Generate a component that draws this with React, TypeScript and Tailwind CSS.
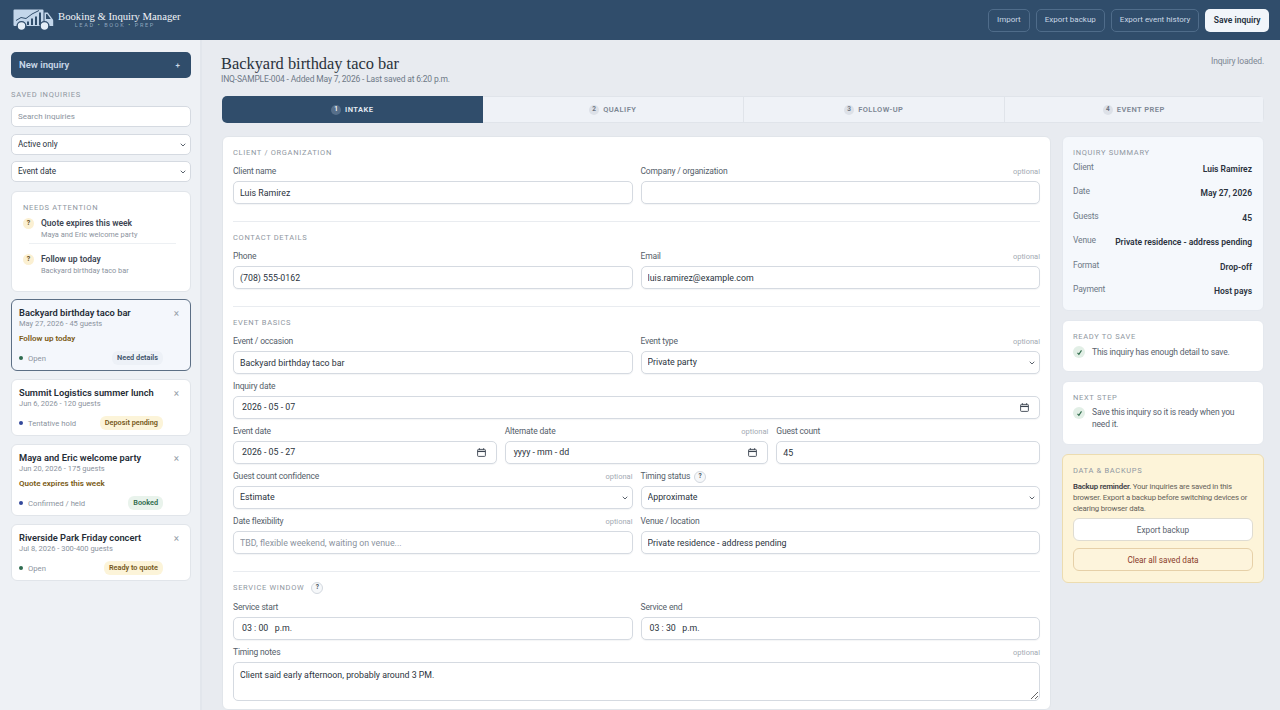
import { ReactNode } from "react";
import { ChevronDown } from "lucide-react";

const inputBox =
  "block h-[23px] w-full rounded-[5px] border border-[#d5dae1] bg-white px-[6px] text-[8.8px] text-[#2b3440] outline-none shadow-[0_1px_1px_rgba(30,50,80,0.05)]";
const sectionLabel = "text-[7.5px] uppercase tracking-[0.09em] text-[#8f97a1]";

function Truck() {
  return (
    <svg width="41" height="22" viewBox="0 0 41 22" fill="none" className="shrink-0">
      <path d="M1.5 0.5h28a1 1 0 0 1 1 1V17H1.5a1 1 0 0 1-1-1V1.5a1 1 0 0 1 1-1z" fill="#c3d6ea" />
      <path d="M31.5 3.5h3.2l5 6.8a2 2 0 0 1 .5 1.2V17h-8.7z" fill="#c3d6ea" />
      <path d="M33 5h1.2l3.6 5H33z" fill="#304d6b" />
      <path d="M3 11.5l5-3 5 1 6-4.500 7-3.500" stroke="#304d6b" strokeWidth="1" />
      <path d="M15 16v-3.500M19 16V9.500M23 16V7.500M27 16V3.500" stroke="#304d6b" strokeWidth="2" />
      <circle cx="8.500" cy="17" r="4.400" fill="#e4edf6" stroke="#304d6b" strokeWidth="1.400" />
      <circle cx="31.500" cy="17" r="4.400" fill="#e4edf6" stroke="#304d6b" strokeWidth="1.400" />
    </svg>
  );
}

function Header() {
  return (
    <header className="flex h-10 shrink-0 items-center justify-between bg-[#304d6b] pl-[13px] pr-[11px]">
      <div className="flex items-center gap-[4px]">
        <Truck />
        <div className="flex flex-col items-center pb-[1px]">
          <span className="text-[10.7px] leading-[12px] text-[#f2f5f9] font-['Liberation_Serif',serif]">
            Booking &amp; Inquiry Manager
          </span>
          <span className="mr-[9px] text-[5.5px] leading-[7px] tracking-[0.3em] text-[#8ea6be]">
            LEAD <span className="text-[#9fc48f]">•</span> BOOK <span className="text-[#9fc48f]">•</span> PREP
          </span>
        </div>
      </div>
      <div className="flex items-center gap-[6px]">
        {["Import", "Export backup", "Export event history"].map((t) => (
          <button key={t} className="h-[23px] rounded-[5px] border border-[#4f6c8a] px-[8px] text-[8px] text-[#c9d7e5]">
            {t}
          </button>
        ))}
        <button className="h-[23px] rounded-[5px] bg-[#f1f5fa] px-[8.5px] text-[8.5px] font-semibold text-[#24303d]">
          Save inquiry
        </button>
      </div>
    </header>
  );
}

function SelectControl({ value, className }: { value: string; className: string }) {
  return (
    <div className="relative">
      <select defaultValue={value} className={`${className} appearance-none`}>
        <option>{value}</option>
      </select>
      <ChevronDown size={8} strokeWidth={2.5} className="pointer-events-none absolute right-[4px] top-1/2 -translate-y-1/2 text-[#3b4450]" />
    </div>
  );
}

function Alert({ title, sub }: { title: string; sub: string }) {
  return (
    <div className="flex gap-[7px]">
      <span className="mt-[1px] flex h-[11px] w-[11px] shrink-0 items-center justify-center rounded-full bg-[#fbf0d2] text-[7px] font-bold text-[#5f4a17]">
        ?
      </span>
      <div>
        <div className="text-[8.5px] font-semibold leading-[12px] text-[#3d4653]">{title}</div>
        <div className="text-[7.4px] leading-[11px] text-[#8b939e]">{sub}</div>
      </div>
    </div>
  );
}

interface InquiryCardProps {
  title: string;
  meta: string;
  warn?: string;
  status: string;
  dot: string;
  badge: string;
  badgeClass: string;
  selected?: boolean;
}

function InquiryCard({ title, meta, warn, status, dot, badge, badgeClass, selected }: InquiryCardProps) {
  return (
    <div
      className={`relative rounded-[6px] border pb-[5px] pl-[7px] pr-2 pt-[6px] ${
        selected ? "border-[#5c6f85] bg-[#f4f7fc]" : "border-[#e1e5ea] bg-white"
      }`}
    >
      <span className="absolute right-[11px] top-[8px] text-[10px] leading-[12px] text-[#98a0aa]">×</span>
      <div className="text-[9.3px] font-semibold leading-[13px] text-[#252c36]">{title}</div>
      <div className="text-[7.5px] leading-[9px] text-[#8b939e]">{meta}</div>
      {warn && <div className="mt-[5px] text-[8px] font-semibold leading-[11px] text-[#7a5a14]">{warn}</div>}
      <div className={`flex items-center justify-between pr-[19px] ${warn ? "mt-[7px]" : "mt-[8px]"}`}>
        <div className="flex items-center gap-[4px] pt-[1px]">
          <span className={`h-[4px] w-[4px] rounded-full ${dot}`} />
          <span className="pl-[1px] text-[7.7px] text-[#8b939e]">{status}</span>
        </div>
        <span className={`rounded-[6px] px-[5px] py-[2px] text-[7.3px] font-semibold leading-[10px] ${badgeClass}`}>{badge}</span>
      </div>
    </div>
  );
}

function Sidebar() {
  const sideInput = "block h-[21px] w-full rounded-[5px] border border-[#d5dae1] bg-white px-[6px] text-[#2b3440]";
  return (
    <aside className="flex w-[202px] shrink-0 flex-col border-r-[2px] border-[#e2e6ec] bg-[#eef1f5] pl-[11px] pr-[9px] pt-3">
      <button className="flex h-[26px] items-center justify-between rounded-[5px] bg-[#304d6b] px-[8px] pt-[1px] text-[9.5px] font-semibold text-[#c8d8e8]">
        <span>New inquiry</span>
        <span className="pr-[3px] text-[8px]">+</span>
      </button>
      <div className={`${sectionLabel} mt-[12px] leading-[9px]`}>Saved inquiries</div>
      <input placeholder="Search inquiries" className={`${sideInput} mt-[7px] text-[8px] placeholder:text-[#8b939e]`} />
      <div className="mt-[7px] flex flex-col gap-[6px]">
        <SelectControl value="Active only" className={`${sideInput} text-[8.2px]`} />
        <SelectControl value="Event date" className={`${sideInput} text-[8.2px]`} />
      </div>
      <div className="mt-[9px] rounded-[6px] border border-[#e1e5ea] bg-white px-[11px] pb-[15px] pt-[11px]">
        <div className={`${sectionLabel} leading-[9px]`}>Needs attention</div>
        <div className="mt-[5px]">
          <Alert title="Quote expires this week" sub="Maya and Eric welcome party" />
        </div>
        <div className="mb-[9px] ml-[6px] mr-[3px] mt-[3px] border-t border-[#edf0f3]" />
        <Alert title="Follow up today" sub="Backyard birthday taco bar" />
      </div>
      <div className="mt-[7px] flex flex-col gap-[8px]">
        <InquiryCard
          selected
          title="Backyard birthday taco bar"
          meta="May 27, 2026 - 45 guests"
          warn="Follow up today"
          status="Open"
          dot="bg-[#2e6b4f]"
          badge="Need details"
          badgeClass="bg-[#edf1f7] text-[#3a4f68]"
        />
        <InquiryCard
          title="Summit Logistics summer lunch"
          meta="Jun 6, 2026 - 120 guests"
          status="Tentative hold"
          dot="bg-[#33489b]"
          badge="Deposit pending"
          badgeClass="bg-[#fcf4d9] text-[#75581a]"
        />
        <InquiryCard
          title="Maya and Eric welcome party"
          meta="Jun 20, 2026 - 175 guests"
          warn="Quote expires this week"
          status="Confirmed / held"
          dot="bg-[#33489b]"
          badge="Booked"
          badgeClass="bg-[#e9f3ec] text-[#2f6a4b]"
        />
        <InquiryCard
          title="Riverside Park Friday concert"
          meta="Jul 8, 2026 - 300-400 guests"
          status="Open"
          dot="bg-[#2e6b4f]"
          badge="Ready to quote"
          badgeClass="bg-[#fcf4d9] text-[#75581a]"
        />
      </div>
    </aside>
  );
}

function Tabs() {
  const tabs = ["Intake", "Qualify", "Follow-up", "Event prep"];
  return (
    <div className="grid grid-cols-4 overflow-hidden rounded-[5px] bg-[#eff2f7]">
      {tabs.map((t, i) => (
        <div
          key={t}
          className={`flex h-[27px] items-center justify-center gap-[4px] text-[7.5px] font-semibold uppercase tracking-[0.06em] ${
            i === 0
              ? "bg-[#304d6b] text-[#e6edf4]"
              : `border-y border-[#e0e4ea] text-[#7d8794] ${i === 3 ? "border-r" : ""} ${i > 1 ? "border-l" : ""}`
          }`}
        >
          <span
            className={`flex h-[10px] w-[10px] items-center justify-center rounded-full text-[6.5px] tracking-normal ${
              i === 0 ? "bg-[#566f8a] text-white" : "bg-[#dde1e8] text-[#69727e]"
            }`}
          >
            {i + 1}
          </span>
          {t}
        </div>
      ))}
    </div>
  );
}

function Hint() {
  return (
    <span className="flex h-[12px] w-[12px] items-center justify-center rounded-full border border-[#d3d8df] bg-[#f6f8fa] text-[6.5px] font-bold tracking-normal text-[#46505c]">
      ?
    </span>
  );
}

function Field({
  label,
  optional,
  hint,
  children,
}: {
  label: string;
  optional?: boolean;
  hint?: boolean;
  children: ReactNode;
}) {
  return (
    <div className="min-w-0">
      <div className="flex h-[17px] items-center justify-between pb-[2px] text-[8.5px] leading-[9px] tracking-[-0.02em] text-[#555e6a]">
        <span className="flex items-center gap-[4px]">
          {label}
          {hint && <Hint />}
        </span>
        {optional && <span className="text-[7.5px] tracking-normal text-[#a3aab3]">optional</span>}
      </div>
      {children}
    </div>
  );
}

function TextBox({ value, placeholder }: { value?: string; placeholder?: string }) {
  return <input readOnly value={value ?? ""} placeholder={placeholder} className={`${inputBox} placeholder:text-[#8b939e]`} />;
}

function SelectBox({ value }: { value: string }) {
  return <SelectControl value={value} className={inputBox} />;
}

function DateBox({ value }: { value: string }) {
  return (
    <div className={`${inputBox} flex items-center justify-between pl-[8px] pr-[10px]`}>
      <span>{value}</span>
      <svg width="9" height="9" viewBox="0 0 9 9" fill="none" stroke="#3b4450" strokeWidth="0.9">
        <rect x="0.6" y="1.4" width="7.8" height="7" rx="0.8" />
        <path d="M0.6 3.4h7.8" strokeWidth="1.3" />
        <path d="M2.4 0.2v1.6M6.6 0.2v1.6" />
      </svg>
    </div>
  );
}

function TimeBox({ value }: { value: string }) {
  return (
    <div className={`${inputBox} flex items-center whitespace-pre pl-[8px]`}>
      <span>{value}</span>
    </div>
  );
}

function Section({ title, hint, children, last }: { title: string; hint?: boolean; children: ReactNode; last?: boolean }) {
  return (
    <section className={last ? "" : "mb-[10px] border-b border-[#e9ecf0] pb-[17px]"}>
      <div className={`${sectionLabel} flex h-[12px] items-center gap-[7px]`}>
        {title}
        {hint && <Hint />}
      </div>
      {children}
    </section>
  );
}

function FormCard() {
  return (
    <div className="rounded-[6px] border border-[#e1e5ea] bg-white px-[10px] pb-[8px] pt-[10px]">
      <Section title="Client / organization">
        <div className="mt-[5px] grid grid-cols-2 gap-x-2">
          <Field label="Client name">
            <TextBox value="Luis Ramirez" />
          </Field>
          <Field label="Company / organization" optional>
            <TextBox />
          </Field>
        </div>
      </Section>
      <Section title="Contact details">
        <div className="mt-[5px] grid grid-cols-2 gap-x-2">
          <Field label="Phone">
            <TextBox value="(708) 555-0162" />
          </Field>
          <Field label="Email" optional>
            <TextBox value="luis.ramirez@example.com" />
          </Field>
        </div>
      </Section>
      <Section title="Event basics">
        <div className="mt-[5px] flex flex-col gap-y-[5px]">
          <div className="grid grid-cols-2 gap-x-2">
            <Field label="Event / occasion">
              <TextBox value="Backyard birthday taco bar" />
            </Field>
            <Field label="Event type" optional>
              <SelectBox value="Private party" />
            </Field>
          </div>
          <Field label="Inquiry date">
            <DateBox value="2026 - 05 - 07" />
          </Field>
          <div className="grid grid-cols-3 gap-x-2">
            <Field label="Event date">
              <DateBox value="2026 - 05 - 27" />
            </Field>
            <Field label="Alternate date" optional>
              <DateBox value="yyyy - mm - dd" />
            </Field>
            <Field label="Guest count">
              <TextBox value="45" />
            </Field>
          </div>
          <div className="grid grid-cols-2 gap-x-2">
            <Field label="Guest count confidence" optional>
              <SelectBox value="Estimate" />
            </Field>
            <Field label="Timing status" hint>
              <SelectBox value="Approximate" />
            </Field>
          </div>
          <div className="grid grid-cols-2 gap-x-2">
            <Field label="Date flexibility" optional>
              <TextBox placeholder="TBD, flexible weekend, waiting on venue..." />
            </Field>
            <Field label="Venue / location">
              <TextBox value="Private residence - address pending" />
            </Field>
          </div>
        </div>
      </Section>
      <Section title="Service window" hint last>
        <div className="mt-[6px] flex flex-col gap-y-[5px]">
          <div className="grid grid-cols-2 gap-x-2">
            <Field label="Service start">
              <TimeBox value="03 : 00   p.m." />
            </Field>
            <Field label="Service end">
              <TimeBox value="03 : 30   p.m." />
            </Field>
          </div>
          <Field label="Timing notes" optional>
            <textarea
              readOnly
              value="Client said early afternoon, probably around 3 PM."
              className="block h-[39px] w-full rounded-[5px] border border-[#d5dae1] bg-white px-[6px] py-[6px] text-[8.8px] leading-[12px] text-[#2b3440] outline-none"
            />
          </Field>
        </div>
      </Section>
    </div>
  );
}

function SummaryRow({ label, value }: { label: string; value: string }) {
  return (
    <div className="flex h-[24.4px] items-start justify-between pr-[1px]">
      <span className="text-[8.5px] leading-[10px] tracking-[-0.02em] text-[#6e7987]">{label}</span>
      <span className="pt-[2px] text-[8.5px] font-semibold leading-[10px] text-[#2a323c]">{value}</span>
    </div>
  );
}

function Check() {
  return (
    <span className="flex h-[12px] w-[12px] shrink-0 items-center justify-center rounded-full bg-[#e2efe6]">
      <svg width="7" height="7" viewBox="0 0 7 7" fill="none" stroke="#2f6a4b" strokeWidth="1.1">
        <path d="M1.5 3.8l1.4 1.6L5.5 1.4" />
      </svg>
    </span>
  );
}

function RightColumn() {
  return (
    <div className="flex w-[202px] shrink-0 flex-col gap-[9px]">
      <div className="h-[175px] rounded-[6px] border border-[#e4e8ee] bg-[#f5f8fc] px-[10px] pt-[11px]">
        <div className={`${sectionLabel} leading-[9px]`}>Inquiry summary</div>
        <div className="mt-[5px]">
          <SummaryRow label="Client" value="Luis Ramirez" />
          <SummaryRow label="Date" value="May 27, 2026" />
          <SummaryRow label="Guests" value="45" />
          <SummaryRow label="Venue" value="Private residence - address pending" />
          <SummaryRow label="Format" value="Drop-off" />
          <SummaryRow label="Payment" value="Host pays" />
        </div>
      </div>
      <div className="h-[52px] rounded-[6px] border border-[#e4e8ee] bg-white px-[10px] pt-[11px]">
        <div className={`${sectionLabel} leading-[9px]`}>Ready to save</div>
        <div className="mt-[5px] flex items-center gap-[7px] text-[8.5px] leading-[12px] tracking-[-0.02em] text-[#59626e]">
          <Check />
          This inquiry has enough detail to save.
        </div>
      </div>
      <div className="h-[64px] rounded-[6px] border border-[#e4e8ee] bg-white px-[10px] pt-[11px]">
        <div className={`${sectionLabel} leading-[9px]`}>Next step</div>
        <div className="mt-[5px] flex items-start gap-[7px] pr-[14px] text-[8.5px] leading-[11.5px] tracking-[-0.02em] text-[#59626e]">
          <Check />
          <span>Save this inquiry so it is ready when you need it.</span>
        </div>
      </div>
      <div className="h-[129px] rounded-[6px] border border-[#ecdcb0] bg-[#fdf4d9] px-[10px] pt-[11px]">
        <div className={`${sectionLabel} leading-[9px]`}>Data &amp; backups</div>
        <p className="mt-[7px] text-[7.8px] leading-[10.8px] tracking-[-0.025em] text-[#66625a]">
          <span className="font-semibold text-[#3d4046]">Backup reminder.</span> Your inquiries are saved in this browser. Export a backup before switching devices or clearing browser data.
        </p>
        <button className="mt-[4px] block h-[23px] w-full rounded-[6px] border border-[#dfdcd2] bg-white text-[8.2px] text-[#59626e]">
          Export backup
        </button>
        <button className="mt-[7px] block h-[23px] w-full rounded-[6px] border border-[#e6d0a8] bg-[#fdf4dc] text-[8.2px] text-[#8a3b2a]">
          Clear all saved data
        </button>
      </div>
    </div>
  );
}

export default function App() {
  return (
    <div className="flex h-[710px] flex-col overflow-hidden bg-[#e8ebf0] font-['Roboto',sans-serif]">
      <Header />
      <div className="flex min-h-0 flex-1">
        <Sidebar />
        <main className="min-w-0 flex-1 pl-5 pr-4 pt-[14px]">
          <div className="flex items-start justify-between">
            <div>
              <h1 className="-ml-[1px] text-[16.4px] leading-[20px] text-[#2a323c] font-['Liberation_Serif',serif]">Backyard birthday taco bar</h1>
              <div className="-ml-[1px] text-[8.5px] leading-[10px] tracking-[-0.02em] text-[#6e7987]">INQ-SAMPLE-004 - Added May 7, 2026 - Last saved at 6:20 p.m.</div>
            </div>
            <span className="pt-[1px] text-[8.5px] tracking-[-0.02em] text-[#7d8794]">Inquiry loaded.</span>
          </div>
          <div className="mt-[12px]">
            <Tabs />
          </div>
          <div className="mt-[13px] flex items-start gap-[11px]">
            <div className="min-w-0 flex-1">
              <FormCard />
            </div>
            <RightColumn />
          </div>
        </main>
      </div>
    </div>
  );
}
